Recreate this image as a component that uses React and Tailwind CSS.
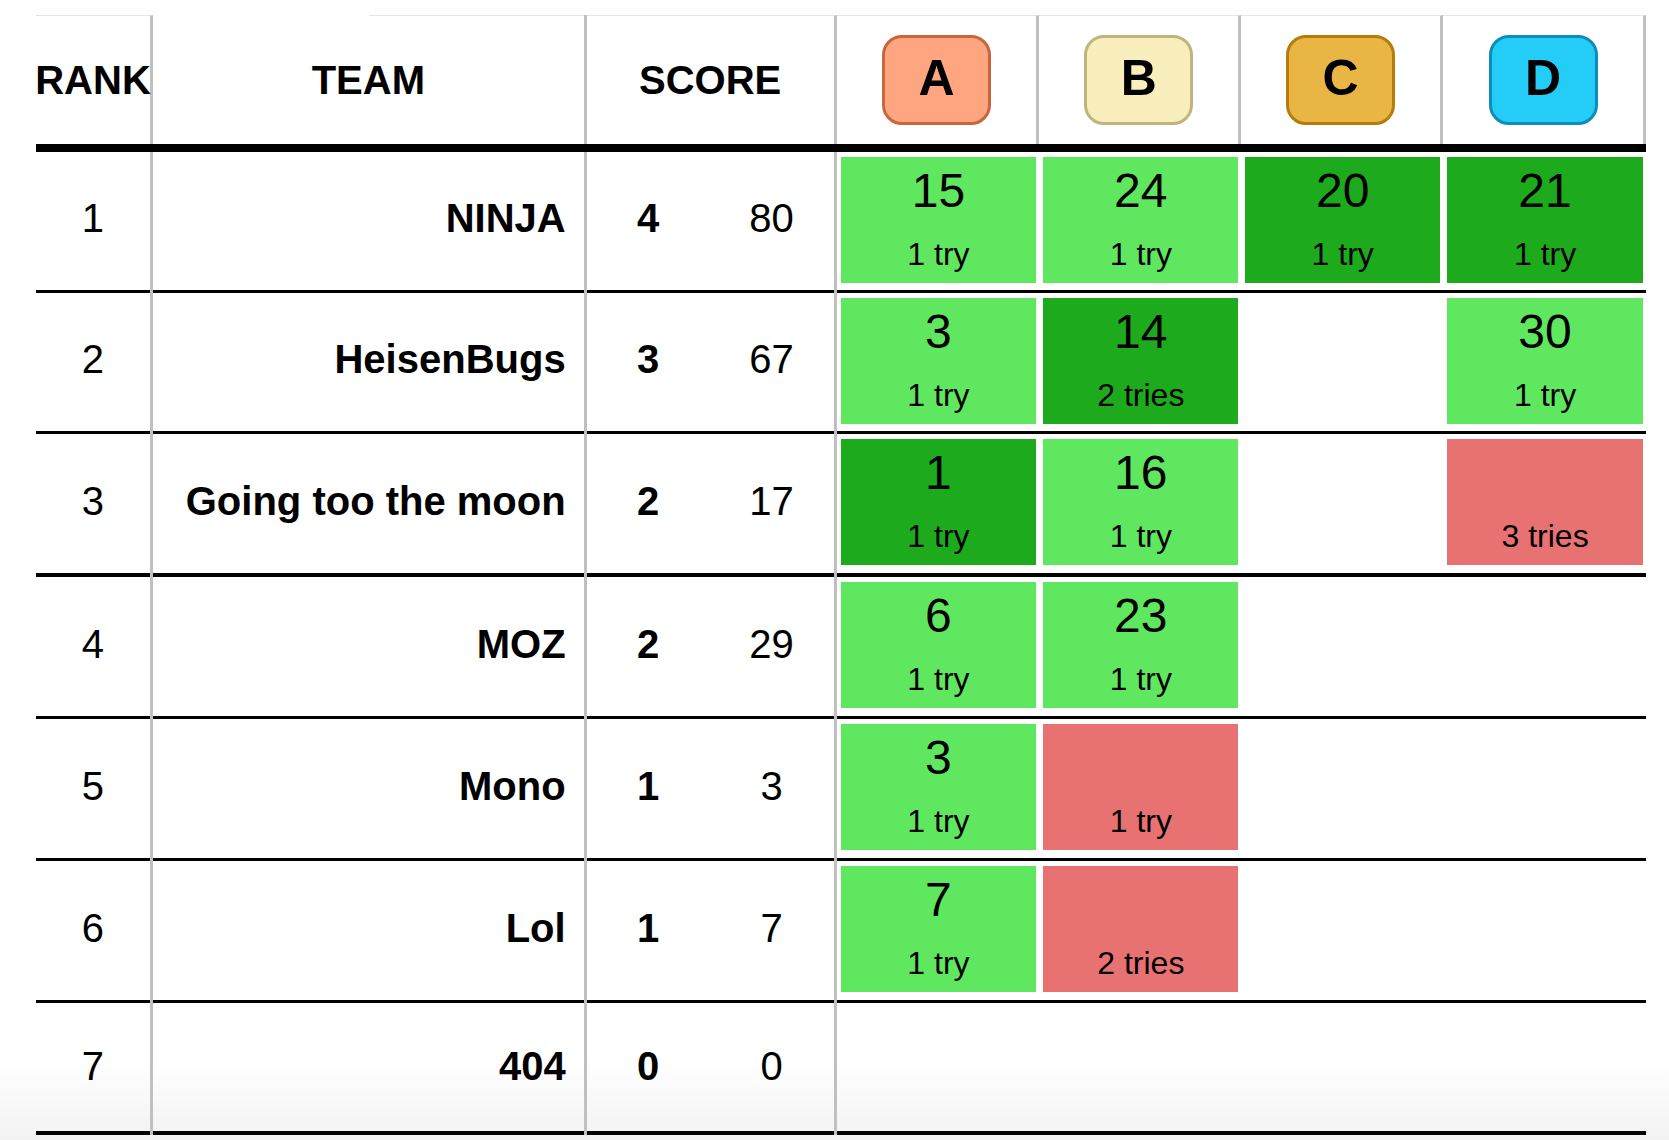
import React from "react";

const G = "bg-[#60e760]";
const D = "bg-[#1daa1d]";
const R = "bg-[#e87272]";

const rows = [
  {
    rank: 1, team: "NINJA", solved: 4, pen: 80, bar: "h-[3px]", h: "h-[138px]",
    cells: [
      { n: "15", t: "1 try", c: G },
      { n: "24", t: "1 try", c: G },
      { n: "20", t: "1 try", c: D },
      { n: "21", t: "1 try", c: D },
    ],
  },
  {
    rank: 2, team: "HeisenBugs", solved: 3, pen: 67, bar: "h-[3px]", h: "h-[138px]",
    cells: [
      { n: "3", t: "1 try", c: G },
      { n: "14", t: "2 tries", c: D },
      null,
      { n: "30", t: "1 try", c: G },
    ],
  },
  {
    rank: 3, team: "Going too the moon", solved: 2, pen: 17, bar: "h-[4px]", h: "h-[139px]",
    cells: [
      { n: "1", t: "1 try", c: D },
      { n: "16", t: "1 try", c: G },
      null,
      { n: "", t: "3 tries", c: R },
    ],
  },
  {
    rank: 4, team: "MOZ", solved: 2, pen: 29, bar: "h-[3px]", h: "h-[139px]",
    cells: [
      { n: "6", t: "1 try", c: G },
      { n: "23", t: "1 try", c: G },
      null,
      null,
    ],
  },
  {
    rank: 5, team: "Mono", solved: 1, pen: 3, bar: "h-[3px]", h: "h-[139px]",
    cells: [
      { n: "3", t: "1 try", c: G },
      { n: "", t: "1 try", c: R },
      null,
      null,
    ],
  },
  {
    rank: 6, team: "Lol", solved: 1, pen: 7, bar: "h-[3px]", h: "h-[139px]",
    cells: [
      { n: "7", t: "1 try", c: G },
      { n: "", t: "2 tries", c: R },
      null,
      null,
    ],
  },
  {
    rank: 7, team: "404", solved: 0, pen: 0, bar: "h-[4px]", h: "h-[128px]", short: true,
    cells: [null, null, null, null],
  },
];

const probWidths = ["w-[203px]", "w-[202px]", "w-[202px]", "w-[203px]"];

const badges = [
  { l: "A", cls: "bg-[#ffa680] border-[#c8663e]" },
  { l: "B", cls: "bg-[#f8efbd] border-[#c2b47d]" },
  { l: "C", cls: "bg-[#e9b646] border-[#b67b08]" },
  { l: "D", cls: "bg-[#24cdf7] border-[#0d8dba]" },
];

function TextCell({ w, children, className = "", row, gray = true }) {
  const pad = row.short ? "pb-[2px]" : "pb-[6px]";
  return (
    <div className={`${w} flex flex-col ${gray ? "border-r-[3px] border-r-[#c0c0c0]" : ""}`}>
      <div className={`${row.h} ${pad} flex items-center text-[40px] leading-[40px] ${className}`}>
        {children}
      </div>
      <div className={`${row.bar} bg-black`} />
    </div>
  );
}

function ProbCell({ w, cell, row }) {
  return (
    <div className={`${w} flex flex-col`}>
      <div className={`${row.h} pl-[4px] pr-[3px] pt-[5px]`}>
        {cell && (
          <div className={`${cell.c} h-[126px] flex flex-col items-center`}>
            <div className="pt-[10px] h-[58px] text-[48px] leading-[48px]">
              {cell.n || "\u00a0"}
            </div>
            <div className="mt-[23px] text-[32px] leading-[32px]">{cell.t}</div>
          </div>
        )}
      </div>
      <div className={`${row.bar} bg-black`} />
    </div>
  );
}

export default function App() {
  return (
    <div
      className="min-h-[1140px] w-[1669px] bg-linear-to-b from-white from-[93%] to-[#f2f2f2] pt-[15px] pl-[36px] text-black"
      style={{ fontFamily: "'Liberation Sans', Arial, Helvetica, sans-serif" }}
    >
      <div className="w-[1610px]">
        {/* header */}
        <div className="flex h-[137px] border-b-[8px] border-black font-bold">
          <div className="w-[117px] border-t border-t-[#e5e5e5] border-r-[3px] border-r-[#c0c0c0] flex items-center justify-center text-[40px] leading-[40px]">
            RANK
          </div>
          <div className="w-[434px] border-r-[3px] border-r-[#c0c0c0] flex flex-col">
            <div className="h-px ml-[216px] bg-[#e5e5e5]" />
            <div className="flex-1 flex items-center justify-center text-[40px] leading-[40px]">
              TEAM
            </div>
          </div>
          <div className="w-[250px] border-t border-t-[#e5e5e5] border-r-[3px] border-r-[#c0c0c0] flex items-center justify-center text-[40px] leading-[40px]">
            SCORE
          </div>
          {badges.map((b, i) => (
            <div
              key={b.l}
              className={`${probWidths[i]} border-t border-t-[#e5e5e5] border-r-[3px] border-r-[#c0c0c0] flex items-center justify-center`}
            >
              <div
                className={`${b.cls} w-[109px] h-[90px] border-[3px] rounded-[20px] flex items-center justify-center pb-[4px] text-[50px] leading-[50px]`}
              >
                {b.l}
              </div>
            </div>
          ))}
        </div>

        {/* body */}
        {rows.map((row) => (
          <div key={row.rank} className="flex">
            <TextCell w="w-[117px]" row={row} className="justify-center">
              {row.rank}
            </TextCell>
            <TextCell w="w-[434px]" row={row} className="justify-end pr-[18px] font-bold">
              {row.team}
            </TextCell>
            <TextCell w="w-[123px]" row={row} gray={false} className="justify-center font-bold">
              {row.solved}
            </TextCell>
            <TextCell w="w-[127px]" row={row} className="justify-center">
              {row.pen}
            </TextCell>
            {row.cells.map((c, i) => (
              <ProbCell key={i} w={probWidths[i]} cell={c} row={row} />
            ))}
          </div>
        ))}
      </div>
    </div>
  );
}
